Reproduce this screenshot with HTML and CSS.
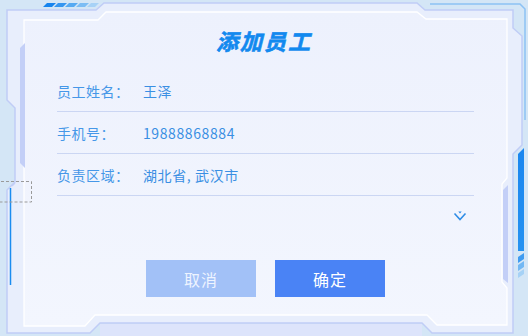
FILE: index.html
```html
<!DOCTYPE html>
<html lang="zh-CN">
<head>
  <meta charset="UTF-8">
  <meta name="viewport" content="width=device-width, initial-scale=1.0">
  <title>添加员工</title>
  <link rel="stylesheet" href="styles.css">
</head>
<body>
  <div class="stage">
    <svg class="frame" width="528" height="336" viewBox="0 0 528 336">
      <defs>
        <linearGradient id="panel" x1="0" y1="0" x2="0" y2="1">
          <stop offset="0" stop-color="#edf1fd"/>
          <stop offset="1" stop-color="#f3f6fe"/>
        </linearGradient>
        <linearGradient id="bar" x1="0" y1="0" x2="0" y2="1">
          <stop offset="0" stop-color="#1a86ef"/>
          <stop offset="1" stop-color="#2592f1"/>
        </linearGradient>
      </defs>
      <rect width="528" height="336" fill="#d4e6f6"/>
      <!-- top right blue line -->
      <path d="M430 4 L520 4 L525 9 L525 120" fill="none" stroke="#8cc2f4" stroke-width="1.5"/>
      <!-- outer band -->
      <path d="M7 10 L96 10 L104 3 L417 3 L425 10 L513 10 L513 28 L522 36 L522 145 L513 154 L513 333 L432 333 L422 323 L100 323 L90 333 L7 333 L7 190 L15 182 L15 108 L7 100 Z" fill="#e8eefc" stroke="#c0cdf6" stroke-width="1.5"/>
      <rect x="100" y="324" width="322" height="12" fill="#dde4fb"/>
      <!-- inner panel -->
      <path d="M24 20 L98 20 L106 12 L417 12 L426 19 L507 19 L507 178 L502 184 L502 282 L507 288 L507 325 L437 325 L427 315 L95 315 L85 326 L24 326 Z" fill="url(#panel)" stroke="#ffffff" stroke-width="1.3"/>
      <!-- top stripes -->
      <path d="M43 7 L47 3 L56 3 L52 7 Z" fill="#1684ee"/>
      <path d="M54 7 L58 3 L67 3 L63 7 Z" fill="#3596f0"/>
      <path d="M65 7 L69 3 L78 3 L74 7 Z" fill="#56aaf2"/>
      <path d="M76 7 L80 3 L89 3 L85 7 Z" fill="#7cbdf4"/>
      <path d="M87 7 L91 3 L99 3 L95 7 Z" fill="#a7d2f6"/>
      <!-- left decorations -->
      <path d="M20 48 L25 43 L25 168 L20 163 Z" fill="#c3cff7"/>
      <path d="M10.5 188 L10.5 285" stroke="#1a8cf0" stroke-width="1.5"/>
      <path d="M12 186 L15 183" stroke="#c3cff7" stroke-width="1.5"/>
      <!-- right decorations -->
      <path d="M518 154 L524 148 L524 251 L518 251 Z" fill="url(#bar)"/>
      <path d="M518 257 L524 253 L524 259 L518 263 Z" fill="#3f9cf1"/>
      <path d="M518 265 L524 261 L524 267 L518 271 Z" fill="#72b8f4"/>
      <path d="M518 273 L524 269 L524 274 L518 278 Z" fill="#a6d2f6"/>
      <path d="M503 190 L508 185 L508 283 L503 279 Z" fill="#c3cff7"/>
      <!-- dashed marker -->
      <rect x="-4" y="181.5" width="35.5" height="20.5" fill="none" stroke="#9a9a9a" stroke-width="1" stroke-dasharray="3 2"/>
    </svg>

    <div class="dialog">
      <h1 class="title">添加员工</h1>
      <div class="form">
        <div class="row"><span class="label">员工姓名：</span><span class="value">王泽</span></div>
        <div class="row"><span class="label">手机号：</span><span class="value">19888868884</span></div>
        <div class="row"><span class="label">负责区域：</span><span class="value">湖北省, 武汉市</span></div>
      </div>
      <div class="more">
        <svg width="14" height="10" viewBox="0 0 14 10">
          <polyline points="1.5,2.5 7,8.5 12.5,2.5" fill="none" stroke="#2f8de6" stroke-width="1.6"/>
          <path d="M5.3 0.5 L8.7 0.5 L7 2.6 Z" fill="#2f8de6"/>
        </svg>
      </div>
      <div class="actions">
        <button class="btn cancel">取消</button>
        <button class="btn ok">确定</button>
      </div>
    </div>
  </div>
</body>
</html>
```

FILE: styles.css
```css
body {
  margin: 0;
  padding: 0;
  background-color: #d4e6f6;
  font-family: "Noto Sans CJK SC", "Noto Sans", sans-serif;
}
.stage {
  position: relative;
  width: 528px;
  height: 336px;
  overflow: hidden;
}
.frame {
  position: absolute;
  top: 0;
  left: 0;
  display: block;
}
.dialog {
  position: relative;
  padding-top: 26px;
}
.title {
  margin: 0;
  height: 28px;
  line-height: 28px;
  text-align: center;
  font-size: 22px;
  font-weight: 700;
  font-style: italic;
  letter-spacing: 2px;
  color: #1289ef;
  -webkit-text-stroke: 0.6px #1289ef;
}
.form {
  margin: 16px 0 0 57px;
  width: 417px;
}
.row {
  display: flex;
  align-items: center;
  height: 41px;
  border-bottom: 1px solid #cbd6f3;
  font-size: 14px;
}
.label {
  width: 86px;
  color: #4597e8;
  letter-spacing: 0.5px;
}
.value {
  color: #3a8fe3;
  letter-spacing: 0.6px;
}
.more {
  margin: 13px 0 0 57px;
  width: 417px;
  height: 14px;
  display: flex;
  justify-content: flex-end;
  align-items: center;
  padding-right: 7px;
  box-sizing: border-box;
}
.more svg {
  display: block;
}
.actions {
  margin-top: 37px;
  display: flex;
  justify-content: center;
  gap: 19px;
  padding-left: 3px;
}
.btn {
  width: 110px;
  height: 37px;
  border: none;
  border-radius: 0;
  font-family: "Noto Sans CJK SC", sans-serif;
  font-size: 16px;
  letter-spacing: 1px;
  cursor: pointer;
}
.cancel {
  background-color: #a2c1f7;
  color: #eef4ff;
}
.ok {
  background-color: #4a83f5;
  color: #ffffff;
}
```
